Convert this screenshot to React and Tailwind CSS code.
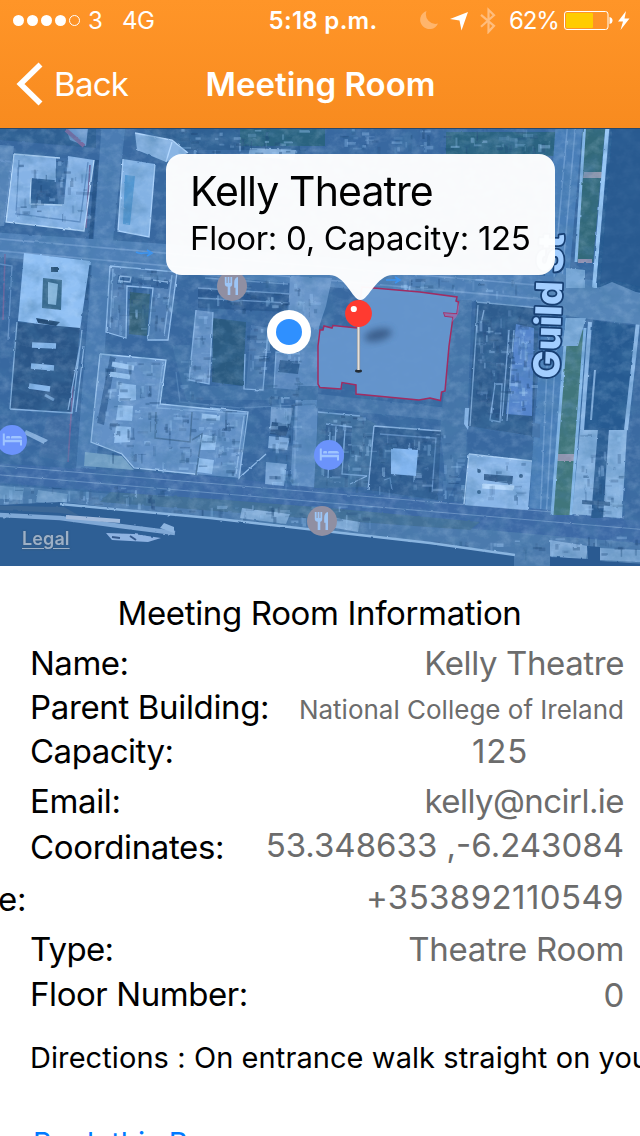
import React from "react";

const BUILDINGS = [
  // [points, fill]
  ["14,154 60,158 62,178 56,186 30,178 31,204 62,205 68,156 94,160 84,231 6,222", "#86b3e6"],
  ["30,178 54,180 64,186 62,205 31,203", "#2f5f95"],
  ["56,158 68,158 64,204 58,204 56,182", "#3e6ea6"],
  ["66,128 88,128 86,146 70,140", "#6f9bcf"],
  ["135,133 172,140 188,153 166,162 137,150", "#8ab5e4"],
  ["123,159 155,164 149,237 118,231", "#83b2e4"],
  ["24,253 90,261 80,330 18,321", "#90c0f4"],
  ["17,322 80,328 72,412 10,409", "#2c5688"],
  ["110,266 177,272 168,340 148,340 153,288 127,286 126,338 106,332", "#4f7db3"],
  ["118,275 170,281 168,289 117,284", "#33629a"],
  ["100,354 166,360 160,404 220,410 246,412 240,478 195,474 134,468 122,454 91,442", "#6391c7"],
  ["47,417 72,413 67,463 38,456", "#3f6ca2"],
  ["198,288 290,294 286,312 198,308", "#2c598f"],
  ["196,310 213,312 209,384 189,380", "#6490c5"],
  ["213,318 246,322 243,386 212,382", "#2a5a80"],
  ["251,325 270,328 263,390 246,388", "#4a78ae"],
  ["276,352 300,354 298,390 274,388", "#5b89bf"],
  ["280,360 300,362 298,374 278,372", "#2f5c90"],
  ["271,407 293,408 289,430 270,428", "#6f9bcd"],
  ["272,422 290,424 286,436 270,434", "#264f80"],
  ["269,436 290,438 287,450 268,448", "#7aa7d9"],
  ["266,462 287,464 284,486 265,484", "#7aa5d6"],
  ["318,412 360,416 376,424 367,487 314,488", "#41709f"],
  ["326,424 352,427 348,478 324,476", "#315e92"],
  ["374,426 441,431 438,500 368,490", "#2f5c90"],
  ["469,454 532,461 528,510 465,505", "#8ab6e8"],
  ["465,408 472,408 468,430 464,424", "#86b4e6"],
  ["476,302 540,308 532,436 468,426", "#2f5b8e"],
  ["516,324 534,328 532,416 506,414", "#5585cc"],
  ["250,148 296,150 294,160 248,156", "#83add9"],
  ["290,276 332,278 326,306 318,330 288,316", "#6a96ca"],
];

const LINES = [
  ["14,154 60,158 M62,205 30,204 31,178 M94,160 84,231 6,222 14,154", "#b5d8fb"],
  ["19,160 16,214 80,222 88,162", "#5d8cc2"],
  ["135,133 172,140 188,153 M166,162 172,142", "#b4d8ff"],
  ["123,159 118,231 149,237 155,164", "#a9d0fa"],
  ["110,266 177,272 168,340 148,340 153,288 127,286 126,338 106,332 110,266", "#92bdec"],
  ["113,269 110,328 M172,275 164,336", "#7eabdc"],
  ["120,276 131,277 130,282 119,281 120,276 M153,280 168,282", "#8cb5e2"],
  ["100,354 166,360 160,404 220,410", "#a2cbf5"],
  ["100,354 91,442 122,454 134,468 195,474", "#9cc4ee"],
  ["163,362 157,408 248,414", "#7ba9db"],
  ["10,409 72,413 82,330 M68,410 80,346 M76,412 84,346", "#84b0e0"],
  ["10,409 17,322", "#7eabd9"],
  ["210,408 248,412 239,478 266,454", "#90bae8"],
  ["244,416 236,474", "#90bae8"],
  ["318,412 360,416 M326,424 352,427 M330,432 328,478 M336,426 334,470 M345,430 342,474 367,476", "#78a6d8"],
  ["374,426 441,431 M374,426 368,490 M350,484 367,476", "#89b3e2"],
  ["380,434 436,438 432,492 M384,480 390,478 392,490", "#5b8abf"],
  ["476,302 540,308 M478,305 470,426 M484,310 481,324", "#78a4d2"],
  ["495,384 502,384 500,422 490,420 495,384 M509,330 502,421 M514,330 507,421", "#75a2d4"],
  ["469,454 532,461 M464,504 469,454", "#b4d7fc"],
  ["245,354 244,389 263,390 268,330", "#82afe0"],
  ["198,288 290,294 M198,298 288,303 M205,278 288,284", "#6491c5"],
  ["196,310 189,380 209,384 213,312", "#86b2e3"],
  ["274,388 276,352 300,354", "#79a6d8"],
  ["0,160 12,162 4,222 M0,264 12,266 8,340", "#628fc4"],
  ["176,372 180,402 240,408 316,404", "#4f7eb3"],
];

function noiseRects() {
  let seed = 41;
  const rnd = () => {
    seed = (seed * 16807) % 2147483647;
    return seed / 2147483647;
  };
  const zones = [
    [104, 360, 50, 96], [160, 410, 76, 58], [206, 280, 80, 30], [194, 312, 18, 70],
    [246, 328, 22, 58], [320, 415, 50, 68], [376, 430, 60, 60], [476, 310, 50, 105],
    [508, 326, 24, 84], [268, 350, 30, 135], [110, 270, 60, 60],
    [475, 462, 50, 40], [16, 160, 70, 60], [160, 505, 210, 18], [0, 486, 170, 18],
    [580, 434, 40, 80], [330, 128, 220, 20], [180, 128, 120, 28], [400, 278, 120, 14],
    [206, 410, 30, 65], [390, 540, 150, 10], [550, 536, 86, 20], [440, 430, 24, 70],
    [180, 350, 16, 50], [290, 280, 30, 30],
  ];
  const out = [];
  zones.forEach(([x, y, w, h]) => {
    const n = Math.round((w * h) / 60);
    for (let i = 0; i < n; i++) {
      const tall = rnd() > 0.5;
      const a = 3 + rnd() * 8;
      const b = 1 + rnd() * 2.5;
      out.push({
        x: x + rnd() * w,
        y: y + rnd() * h,
        w: tall ? b : a,
        h: tall ? a : b,
        light: rnd() > 0.5,
        o: 0.12 + rnd() * 0.35,
      });
    }
  });
  return out;
}
const SPECKS = noiseRects();

function Fork({ x, y }) {
  return (
    <g transform={`translate(${x} ${y})`}>
      <circle r="15" fill="#908fa2" />
      <g fill="#9cc5f6">
        <path d="M-7.2-9h1.800v6h1v-6h1.800v6h1v-6h1.800v7c0 1.600-.8 2.500-1.900 2.800V9h-2.600V.8c-1.700-.3-2.900-1.200-2.900-2.800z" />
        <path d="M6-9V9H3.500V1.800H2.200V-3.200C2.200-6.500 3.700-8.800 6-9z" />
      </g>
    </g>
  );
}

function Bed({ x, y }) {
  return (
    <g transform={`translate(${x} ${y})`}>
      <circle r="15" fill="#6b93fb" />
      <path
        d="M-9.200-6.500h2v6.200H10V5.500H8V2.200H-7.200V5.500h-2zM-5.900-2.800q0-1.300 1.300-1.300h1.500q1.300 0 1.300 1.300v1.300h-4.100zM-1-1.500V-3q0-1.100 1.200-1.100h7.500q2.300 0 2.300 2.600z"
        fill="#9ec4ff"
      />
    </g>
  );
}

function MapScene() {
  return (
    <svg className="block h-full w-full" viewBox="0 128 640 438">
      <defs>
        <filter id="grain" x="0" y="0" width="100%" height="100%">
          <feTurbulence type="fractalNoise" baseFrequency="0.09 0.11" numOctaves="4" seed="8" />
          <feColorMatrix values="0 0 0 0 0.62  0 0 0 0 0.8  0 0 0 0 1  1.8 0 0 0 -0.75" />
        </filter>
        <filter id="grainDark" x="0" y="0" width="100%" height="100%">
          <feTurbulence type="fractalNoise" baseFrequency="0.05 0.06" numOctaves="4" seed="23" />
          <feColorMatrix values="0 0 0 0 0.06  0 0 0 0 0.2  0 0 0 0 0.4  2 0 0 0 -0.85" />
        </filter>
        <filter id="rough" filterUnits="userSpaceOnUse" x="-20" y="108" width="680" height="478">
          <feTurbulence type="fractalNoise" baseFrequency="0.15" numOctaves="2" seed="3" />
          <feDisplacementMap in="SourceGraphic" scale="2" xChannelSelector="R" yChannelSelector="G" />
          <feGaussianBlur stdDeviation="0.500" />
        </filter>
        <filter id="soft" x="-50%" y="-50%" width="200%" height="200%">
          <feGaussianBlur stdDeviation="3.500" />
        </filter>
      </defs>
      <rect y="128" width="640" height="438" fill="#3768a0" />
      <g filter="url(#rough)">
        <rect x="-20" y="108" width="680" height="478" fill="#3768a0" />
        <path d="M0 120H96V148L0 140zM130 120H300V150H180z" fill="#2e5f92" />
        <path d="M0 145L14 146 4 226 0 226z" fill="#5584b8" />
        <path d="M240 120H325V146H240zM446 132H556V156H446z" fill="#2b6480" />
        <path d="M556 120H583L563 346 551 566H525L540 346z" fill="#4a7eb8" />
        <path d="M568 120L548 346 538 566M576 120L556 346 546 520" stroke="#6a99cd" strokeWidth="1.500" fill="none" />
        <path d="M102 120H126L112 250 96 470H76L93 250z" fill="#4b7cb3" />
        <path d="M97 160L86 300" stroke="#28558a" strokeWidth="4" />
        <path d="M302 290H320L316 488H290z" fill="#5b8bc1" />
        <path d="M300 320L294 480" stroke="#6d9ace" strokeWidth="2" />
        <path d="M-10 232L166 244 640 284V318L320 286 -10 256z" fill="#5080b7" />
        <path d="M-10 238L640 294M-10 250L640 308" stroke="#6c98cb" strokeWidth="1.600" />
        <path d="M172 345L186 400 318 400 318 386 200 386 190 345z" fill="#4171a6" />
        <path d="M318 394L450 408 540 424V438L440 420 316 408z" fill="#4676ab" />
        <path d="M452 300L472 300 466 460 448 500 440 430z" fill="#4474a9" />
        <path d="M-10 463L210 476 440 501 660 519V546L430 528 210 500 -10 482z" fill="#3c6aa6" />
        <path d="M-10 465L660 521M-10 474L660 531" stroke="#6991c2" strokeWidth="1" />
        <path d="M-10 484L210 502 440 526 660 545V576H510L515 555 430 543 210 518 60 504 -10 507z" fill="#4c7aad" />
        <path d="M110 492L200 498 330 508 480 522 470 530 330 520 100 502z" fill="#426f97" />
        <path d="M85 452L122 456 134 470 84 466z" fill="#719fc4" />
        <path d="M550 540L588 546 586 560 550 556zM600 548L640 550V562L600 560z" fill="#7fa9d6" />
        <path d="M583 120H606L593 262H576z" fill="#33697a" />
        <path d="M584 172H603L602 178H583z" fill="#9097ad" />
        <path d="M566 330H584L570 515H552z" fill="#41767c" />
        <path d="M557 454H577L576 461H556z" fill="#9095b0" />
        <path d="M578 261H592" stroke="#9090b0" strokeWidth="4" />
        <path d="M585 120L576 262M567 318L552 515M585 328L571 515" stroke="#83b6e7" strokeWidth="3" />
        <path d="M608 120L594 288" stroke="#96c6f5" strokeWidth="4" />
        <path d="M611 120H660V295L596 287z" fill="#275a90" />
        <path d="M593 320L636 326 626 430H584z" fill="#285a91" />
        <path d="M638 324H660V520H624z" fill="#3a6aa1" />
        <path d="M590 322L582 430M638 322L626 430" stroke="#88b5e5" strokeWidth="4" />
        <path d="M595 370L591 420" stroke="#7fabd9" strokeWidth="2" />
        <path d="M580 430H627L622 518 572 514z" fill="#85b1df" />
        <path d="M598 428H609L603 518H591z" fill="#2c5c91" />
        <path d="M582 502L610 504" stroke="#3a6798" strokeWidth="4" />
        <path d="M558 272L596 289 612 282 650 298V326L580 318 540 310z" fill="#5585b8" />
        <path d="M566 268L585 270 585 288 566 288zM567 318L586 318 578 346H562z" fill="#7aa9d8" />
        {BUILDINGS.map(([p, f], i) => (
          <polygon key={i} points={p} fill={f} />
        ))}
        <path d="M125 175L135 176 130 225 123 224z" fill="#5298d3" />
        <path d="M130 292L150 294 147 336 129 334z" fill="#325f77" />
        <path d="M43 278L62 280 61 310 42 308z" fill="#396a8e" />
        <path d="M48 282L58 284 56 305 48 304z" fill="#83b3d8" />
        <path d="M51 267H58V272H51z" fill="#2a5279" />
        <path d="M36 318L60 322 56 326 38 323z" fill="#234973" />
        <path d="M45 395L54 400" stroke="#6595c8" strokeWidth="3" />
        <path d="M120 383L136 385V400L118 402zM118 405L133 406 132 421 116 420zM116 426L131 427 130 442 114 443zM117 364L133 367M200 434L217 437 215 450 200 450zM199 458L214 460 212 474 197 472z" fill="#93bfee" />
        <path d="M110 356L116 358 104 425 97 423z" fill="#3d6a9f" />
        <path d="M112 364L134 368M110 374L130 377M202 416L220 418" stroke="#9cc6f2" strokeWidth="5" />
        <path d="M156 412L155 438 190 442 192 412M192 440L202 434 196 474" stroke="#48739f" strokeWidth="1.500" fill="none" />
        <path d="M26 430L48 440 44 444 24 434z" fill="#86aedb" />
        <path d="M484 474L513 476 512 484 484 480z" fill="#365f8f" />
        <path d="M482 486L514 488" stroke="#b7d9fc" strokeWidth="5" />
        <circle cx="479" cy="471" r="2" fill="#34618e" />
        <circle cx="521" cy="476" r="2" fill="#34618e" />
        <circle cx="479" cy="492" r="2" fill="#34618e" />
        <path d="M90 165L86 228M73 386L68 462M5 254L3 320" stroke="#6b659c" strokeWidth="1.600" />
        <path d="M66 130L84 146" stroke="#7d6ba0" strokeWidth="4" />
        <path d="M-10 485L24 488 22 500 -10 498zM38 490L68 494 66 505 36 502z" fill="#6f9dca" />
        <path d="M242 508L290 514 286 524 240 518zM335 518L360 522 358 532 335 528z" fill="#82acd8" />
        {LINES.map(([p, c], i) => (
          <path key={i} d={"M" + p} stroke={c} strokeWidth="1.300" fill="none" />
        ))}
        {SPECKS.map((s, i) => (
          <rect key={i} x={s.x} y={s.y} width={s.w} height={s.h} fill={s.light ? "#9bc8f5" : "#1d4675"} opacity={s.o} />
        ))}
        <path d="M32 345L56 346M31 366L54 368M29 386L50 389" stroke="#86b6ea" strokeWidth="5.500" />
        <path d="M391 448L418 450 416 476 391 474z" fill="#83b6f0" />
      </g>
      <rect y="128" width="640" height="438" filter="url(#grain)" opacity="0.240" />
      <rect y="128" width="640" height="438" filter="url(#grainDark)" opacity="0.450" />
      <g filter="url(#rough)">
        <path d="M-20 506L60 502 210 518 320 530 430 543 514 555V590H-20z" fill="#2e5e95" />
        <path d="M550 557L588 559 587 546 600 547 600 561 660 565V590H550z" fill="#2a5a91" />
        <path d="M613 120H660V292L612 280 600 284z" fill="#275a90" opacity="0.700" />
        <path d="M-20 505L64 507 80 516 60 513 -20 509z" fill="#3c6797" />
        <path d="M-20 514L60 518 120 526 175 533" stroke="#7fa8d6" strokeWidth="4.500" fill="none" />
        <path d="M66 517L120 521" stroke="#a2bbdd" strokeWidth="4" />
        <path d="M160 528L164 523 174 527V533z" fill="#8cb4e0" />
        <path d="M106 533L134 534 161 538 148 542 112 540z" fill="#8fb3e2" />
        <path d="M112 537L120 538M130 536L136 540" stroke="#34588c" strokeWidth="2" />
        <path d="M60 504L210 518 430 543 515 555" stroke="#8ab5e0" strokeWidth="2.500" fill="none" />
      </g>
      <path d="M136 252q4 2 8 1h6m-3-3l5 3-5 3M386 280h12m-3-3l5 3-5 3" stroke="#3d94ef" strokeWidth="1.600" fill="none" />

      <path
        d="M362 287L420 292 457 297 456 301 458.500 302 457 314 444 313 445 316 453 317 449 346 445 391 441.500 392 440.500 400.500 430 398 419 400 356 394 356 385 342 382.500 341 389 320 387.500 318 384 318 346 320 330 323 330 324 326 332 328 333 325.500 357 328z"
        fill="#6696cd"
        fillOpacity="0.960"
        stroke="#a12c62"
        strokeWidth="1.500"
      />
      <path d="M458 302q4 11-6 20l1-5-8-1-1-3 13 1z" fill="#a274b4" fillOpacity="0.700" />
      <path d="M343 383.500L355 386V392L342 389z" fill="#3a699f" />
      <ellipse cx="378" cy="335" rx="14" ry="6" transform="rotate(-14 378 335)" fill="#30517b" opacity="0.800" filter="url(#soft)" />

      <text
        transform="translate(559 379) rotate(-88)"
        textLength="145"
        lengthAdjust="spacingAndGlyphs"
        className="font-[Inter,sans-serif] text-[36px] font-extrabold"
        fill="#a3ceff"
        stroke="#173f73"
        strokeWidth="3.500"
        paintOrder="stroke"
        strokeLinejoin="round"
      >
        Guild St
      </text>
      <Fork x={232} y={286} />
      <Fork x={322} y={521} />
      <Bed x={12} y={440} />
      <Bed x={329} y={455} />
      <circle cx="289" cy="332" r="22" fill="#fff" />
      <circle cx="289" cy="332" r="13" fill="#2f90ff" />

      <path
        d="M182 154H539a16 16 0 0 1 16 16V259a16 16 0 0 1-16 16H393C376 275 369 300 360.500 300S346 275 329 275H182a16 16 0 0 1-16-16V170a16 16 0 0 1 16-16z"
        fill="#fff"
        fillOpacity="0.970"
      />
      <ellipse cx="358.500" cy="371" rx="3.500" ry="1.700" fill="#232c35" />
      <path d="M358.500 325V370" stroke="#80858c" strokeWidth="3.200" />
      <path d="M358.500 325V370" stroke="#e4e0dc" strokeWidth="2" />
      <circle cx="358.500" cy="313.500" r="13.400" fill="#ff3a30" />
      <circle cx="353.800" cy="309" r="3.100" fill="#fff" />
      <path d="M0 128.500H640" stroke="#28476b" strokeWidth="1" />
    </svg>
  );
}

function StatusBar() {
  return (
    <div className="relative flex h-[40px] items-center justify-between pl-[13px] pr-[9px] text-[24px]">
      <div className="flex items-center">
        <svg className="h-[14px] w-[68px]" viewBox="0 0 68 14" fill="#fff">
          <circle cx="5.500" cy="7.500" r="5.500" />
          <circle cx="19.500" cy="7.500" r="5.500" />
          <circle cx="33.500" cy="7.500" r="5.500" />
          <circle cx="47.500" cy="7.500" r="5.500" />
          <circle cx="61.500" cy="7.500" r="5" fill="none" stroke="#fff" />
        </svg>
        <span className="ml-[7px] w-[34px] pt-[2px]">3</span>
        <span className="pt-[2px] tracking-[-0.5px]">4G</span>
      </div>
      <div className="absolute inset-x-0 pt-[2px] pl-[6px] text-center font-semibold tracking-[0.3px]">5:18 p.m.</div>
      <div className="flex items-center">
        <svg className="h-[28px] w-[78px]" viewBox="0 0 78 28">
          <path d="M7.500 5A9.300 9.300 0 1 0 19 17.500 9.600 9.600 0 0 1 7.500 5z" fill="#ffb56c" />
          <path d="M49 6L42.500 24.500 40.500 14.500 31 13z" fill="#fff" />
          <path d="M61 8.500L74 19.500 68.500 25.500V3.500L74 9 61 20.500" transform="translate(1 .3)" fill="none" stroke="#ffbd7d" strokeWidth="2.200" />
        </svg>
        <span className="ml-[12px] w-[54px] pt-[2px] tracking-[-1.100px]">62%</span>
        <svg className="h-[28px] w-[68px]" viewBox="0 0 68 28">
          <rect x="1.500" y="5.500" width="43.500" height="18" rx="2.500" fill="none" stroke="#fff" />
          <rect x="3" y="7" width="27" height="15" rx="1" fill="#ffcc00" />
          <path d="M46.500 11q3 .5 3 3.500t-3 3.500z" fill="#fff" />
          <path d="M63 5L55 15.500h5L57.500 24 66.500 12.500h-5z" fill="#fff" />
        </svg>
      </div>
    </div>
  );
}

function Header() {
  return (
    <header className="h-[128px] shrink-0 bg-linear-to-b from-[#ff9528] to-[#f88b1f] text-white">
      <StatusBar />
      <div className="relative flex h-[88px] items-center pl-[16px]">
        <svg className="h-[44px] w-[28px]" viewBox="0 0 28 44">
          <path d="M24.500 2.500L4.500 22 24.500 41.500" fill="none" stroke="#fff" strokeWidth="5.600" />
        </svg>
        <span className="ml-[10px] pt-[2px] text-[33px] tracking-[-0.700px]">Back</span>
        <h1 className="absolute inset-x-0 pt-[2px] pl-[1px] text-center text-[33px] font-semibold">Meeting Room</h1>
      </div>
    </header>
  );
}

function Row({ label, value, className = "", labelClass = "", valueClass = "tracking-[-0.400px]" }) {
  return (
    <div className={"flex h-[44px] items-center justify-between pl-[30px] pr-[16px] leading-[44px] whitespace-nowrap " + className}>
      <span className={labelClass}>{label}</span>
      <span className={"text-[#6c6c6c] " + valueClass}>{value}</span>
    </div>
  );
}

export default function App() {
  return (
    <div className="flex h-[1136px] w-[640px] flex-col overflow-hidden bg-white font-[Inter,sans-serif] text-black">
      <Header />
      <section className="relative h-[438px] shrink-0">
        <MapScene />
        <div className="absolute top-[37px] left-[190px] whitespace-nowrap">
          <div className="text-[41px] leading-[52px] tracking-[-0.900px]">Kelly Theatre</div>
          <div className="text-[33px] leading-[42px] tracking-[-0.320px]">Floor: 0, Capacity: 125</div>
        </div>
        <div className="absolute top-[398px] left-[22px] text-[18px] leading-[26px] font-semibold tracking-[0.100px] text-[#9db0c6] underline underline-offset-[3px] text-shadow-[0_0_2px_#34526f]">
          Legal
        </div>
      </section>
      <main className="shrink-0 pt-[25px] text-[33px] tracking-[-0.350px]">
        <h2 className="h-[44px] pr-[1px] text-center leading-[44px]">Meeting Room Information</h2>
        <Row className="mt-[6px]" label="Name:" value="Kelly Theatre" labelClass="tracking-[-0.500px]" />
        <Row label="Parent Building:" value="National College of Ireland" valueClass="pt-[5px] text-[26px] tracking-[0px]" />
        <Row label="Capacity:" value="125" labelClass="tracking-[-0.500px]" valueClass="w-[152px] tracking-[0.800px]" />
        <Row className="mt-[6px]" label="Email:" value="kelly@ncirl.ie" valueClass="tracking-[-0.550px]" />
        <Row className="mt-[2px]" label="Coordinates:" value="53.348633 ,-6.243084" valueClass="pb-[4px] tracking-[0px]" />
        <Row className="mt-[8px]" label="e:" value="+353892110549" labelClass="-ml-[32px]" valueClass="pb-[4px] tracking-[0.400px]" />
        <Row className="mt-[6px]" label="Type:" value="Theatre Room" labelClass="tracking-[-0.700px]" valueClass="tracking-[-0.300px]" />
        <Row className="mt-[1px]" label="Floor Number:" value="0" labelClass="tracking-[-0.420px]" valueClass="pt-[2px]" />
        <p className="mt-[20px] h-[44px] pl-[30px] text-[29px] leading-[44px] tracking-[0.080px] whitespace-nowrap">
          Directions : On entrance walk straight on your left
        </p>
        <a className="mt-[41px] block h-[44px] pl-[33px] text-[29px] leading-[44px] tracking-[0.080px] text-[#007aff]">Book this Room</a>
      </main>
    </div>
  );
}
